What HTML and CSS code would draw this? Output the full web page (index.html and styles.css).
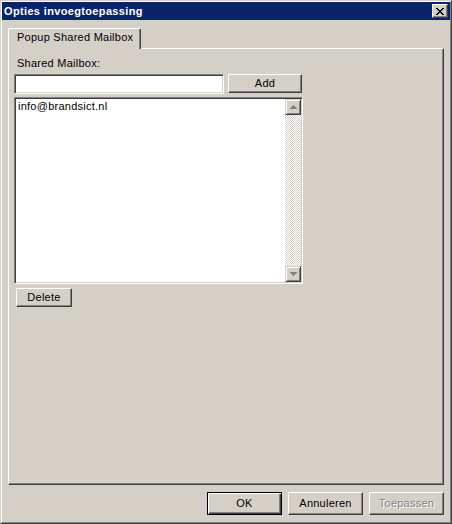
FILE: index.html
```html
<!DOCTYPE html>
<html>
<head>
<meta charset="utf-8">
<link rel="stylesheet" href="styles.css">
</head>
<body>
<div class="window">
  <div class="frame">
    <div class="titlebar">
      <span class="title">Opties invoegtoepassing</span>
      <button class="close" aria-label="Sluiten">
        <svg width="8" height="7" viewBox="0 0 8 7" shape-rendering="crispEdges">
          <path d="M0 0h2v1h-2z M6 0h2v1h-2z M1 1h2v1h-2z M5 1h2v1h-2z M2 2h4v1h-4z M3 3h2v1h-2z M2 4h4v1h-4z M1 5h2v1h-2z M5 5h2v1h-2z M0 6h2v1h-2z M6 6h2v1h-2z" fill="#000"/>
        </svg>
      </button>
    </div>
    <div class="client">
      <div class="tabs">
        <div class="tab">Popup Shared Mailbox</div>
      </div>
      <div class="panel">
        <div class="label">Shared Mailbox:</div>
        <div class="add-row">
          <input class="edit" type="text">
          <button class="btn add">Add</button>
        </div>
        <div class="listbox">
          <div class="items">
            <div class="item">info@brandsict.nl</div>
          </div>
          <div class="scrollbar">
            <div class="sbtn">
              <svg width="7" height="4" viewBox="0 0 7 4" shape-rendering="crispEdges"><path d="M3 0h1v1h-1z M2 1h3v1h-3z M1 2h5v1h-5z M0 3h7v1h-7z" fill="#808080"/></svg>
            </div>
            <div class="track"></div>
            <div class="sbtn">
              <svg width="7" height="4" viewBox="0 0 7 4" shape-rendering="crispEdges"><path d="M0 0h7v1h-7z M1 1h5v1h-5z M2 2h3v1h-3z M3 3h1v1h-1z" fill="#808080"/></svg>
            </div>
          </div>
        </div>
        <button class="btn del">Delete</button>
      </div>
      <div class="actions">
        <button class="btn dlg default">OK</button>
        <button class="btn dlg">Annuleren</button>
        <button class="btn dlg disabled">Toepassen</button>
      </div>
    </div>
  </div>
</div>
</body>
</html>
```

FILE: styles.css
```css
html, body {
  margin: 0;
  padding: 0;
  background: #d4d0c8;
}

body {
  font-family: "Liberation Sans", Arial, sans-serif;
  font-size: 11px;
  letter-spacing: 0.25px;
  color: #000;
}

.window {
  box-sizing: border-box;
  width: 452px;
  height: 524px;
  border: 1px solid;
  border-color: #d4d0c8 #404040 #404040 #d4d0c8;
  background: #d4d0c8;
}

.frame {
  box-sizing: border-box;
  height: 100%;
  border: 1px solid;
  border-color: #ffffff #808080 #808080 #ffffff;
  display: flex;
  flex-direction: column;
}

.titlebar {
  height: 18px;
  background: #0a246a;
  display: flex;
  align-items: center;
  justify-content: space-between;
  padding: 0 2px 0 2px;
}

.title {
  color: #fff;
  font-weight: bold;
  font-size: 11px;
  letter-spacing: 0.35px;
  line-height: 13px;
  padding-left: 0;
}

.close {
  box-sizing: border-box;
  width: 16px;
  height: 14px;
  padding: 0;
  margin: 0;
  background: #d4d0c8;
  border: 1px solid;
  border-color: #ffffff #404040 #404040 #ffffff;
  box-shadow: inset -1px -1px #808080;
  display: flex;
  align-items: center;
  justify-content: center;
}

.close svg {
  display: block;
}

.client {
  flex: 1;
  display: flex;
  flex-direction: column;
  padding: 8px 6px 0 6px;
}

.tabs {
  display: flex;
  height: 20px;
  position: relative;
  z-index: 1;
}

.tab {
  box-sizing: border-box;
  width: 133px;
  height: 21px;
  padding: 2px 0 0 8px;
  line-height: 13px;
  background: #d4d0c8;
  border-top: 1px solid #ffffff;
  border-left: 1px solid #ffffff;
  border-right: 1px solid #404040;
  box-shadow: inset -1px 0 #808080;
  border-top-left-radius: 2px;
  border-top-right-radius: 2px;
}

.panel {
  box-sizing: border-box;
  height: 437px;
  border: 1px solid;
  border-color: #ffffff #404040 #404040 #ffffff;
  box-shadow: inset -1px -1px #808080;
  padding: 8px 0 0 5px;
  display: flex;
  flex-direction: column;
  align-items: flex-start;
}

.label {
  line-height: 13px;
  margin: 0 0 4px 3px;
}

.add-row {
  display: flex;
  align-items: flex-start;
  gap: 4px;
  height: 20px;
}

.edit {
  box-sizing: border-box;
  width: 210px;
  height: 20px;
  margin: 0;
  padding: 0 3px;
  background: #fff;
  border: 1px solid;
  border-color: #808080 #ffffff #ffffff #808080;
  box-shadow: inset 1px 1px #404040, inset -1px -1px #d4d0c8;
  font: inherit;
  outline: none;
}

.btn {
  box-sizing: border-box;
  margin: 0;
  padding: 0;
  background: #d4d0c8;
  border: 1px solid;
  border-color: #ffffff #404040 #404040 #ffffff;
  box-shadow: inset -1px -1px #808080;
  font-family: inherit;
  font-size: 11px;
  letter-spacing: 0.25px;
  color: #000;
  line-height: 13px;
  text-align: center;
}

.add {
  width: 74px;
  height: 19px;
}

.listbox {
  box-sizing: border-box;
  width: 289px;
  height: 187px;
  margin-top: 3px;
  background: #fff;
  border: 1px solid;
  border-color: #808080 #ffffff #ffffff #808080;
  box-shadow: inset 1px 1px #404040, inset -1px -1px #d4d0c8;
  padding: 1px;
  display: flex;
}

.items {
  flex: 1;
  padding: 1px 0 0 2px;
}

.item {
  line-height: 13px;
}

.scrollbar {
  width: 16px;
  display: flex;
  flex-direction: column;
}

.sbtn {
  box-sizing: border-box;
  width: 16px;
  height: 16px;
  background: #d4d0c8;
  border: 1px solid;
  border-color: #d4d0c8 #404040 #404040 #d4d0c8;
  box-shadow: inset 1px 1px #ffffff, inset -1px -1px #808080;
  display: flex;
  align-items: center;
  justify-content: center;
}

.track {
  flex: 1;
  background-color: #d4d0c8;
  background-image: conic-gradient(#ffffff 25%, #d4d0c8 0 50%, #ffffff 0 75%, #d4d0c8 0);
  background-size: 2px 2px;
}

.del {
  width: 56px;
  height: 19px;
  margin: 4px 0 0 2px;
}

.actions {
  display: flex;
  justify-content: flex-end;
  gap: 6px;
  margin-top: 7px;
}

.dlg {
  width: 75px;
  height: 23px;
}

.default {
  border: 1px solid #000;
  box-shadow: inset 1px 1px #ffffff, inset -1px -1px #404040, inset -2px -2px #808080;
}

.disabled {
  color: #808080;
  text-shadow: 1px 1px #ffffff;
}
```
